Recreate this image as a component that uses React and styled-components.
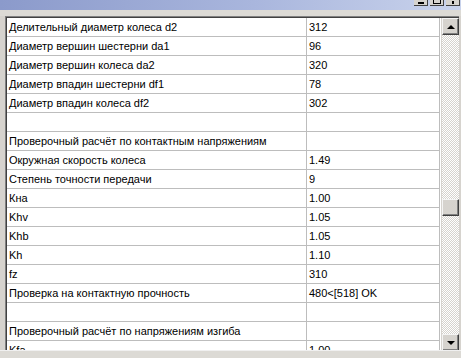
import React from 'react';
import styled, { createGlobalStyle } from 'styled-components';

const GlobalStyle = createGlobalStyle`
  html, body {
    margin: 0;
    padding: 0;
    background: #d6d3ce;
    overflow: hidden;
  }
  body {
    font-family: "Liberation Sans", Arial, sans-serif;
  }
`;

const Window = styled.div`
  width: 461px;
  height: 358px;
  display: flex;
  flex-direction: column;
  background: #d6d3ce;
`;

const TitleBar = styled.div`
  height: 10px;
  flex: none;
  display: flex;
  justify-content: flex-end;
  align-items: flex-start;
  padding-right: 1px;
  gap: 2px;
  background: linear-gradient(to right, #8b9acb 0%, #a9b6dd 55%, #c9d3ec 100%);
`;

const CaptionButton = styled.div`
  width: 14px;
  height: 6px;
  background: #d6d3ce;
  border-right: 1px solid #404040;
  border-bottom: 1px solid #404040;
  display: flex;
  justify-content: center;
  align-items: flex-end;
  padding-bottom: 1px;
  box-sizing: border-box;
`;

const Glyph = styled.div`
  width: ${p => p.w}px;
  height: ${p => p.h}px;
  background: ${p => (p.hollow ? 'transparent' : '#000')};
  border: ${p => (p.hollow ? '1px solid #000' : 'none')};
  border-top: none;
  box-sizing: border-box;
`;

const Strip = styled.div`
  height: 6px;
  flex: none;
  background: #dcdad5;
`;

const Frame = styled.div`
  margin-left: 5px;
  margin-right: 2px;
  height: 334px;
  flex: none;
  display: flex;
  border-top: 1px solid #808080;
  border-left: 1px solid #808080;
  box-shadow: inset 1px 1px 0 #404040;
  padding: 1px 0 0 1px;
  box-sizing: border-box;
  overflow: hidden;
`;

const Grid = styled.div`
  flex: 1;
  background: #fff;
  display: flex;
  flex-direction: column;
  overflow: hidden;
`;

const Row = styled.div`
  display: grid;
  grid-template-columns: 300px 133px;
  height: 19px;
  flex: none;
`;

const Cell = styled.div`
  height: 18px;
  border-bottom: 1px solid #bdbdbd;
  border-right: 1px solid #bdbdbd;
  padding-left: 2px;
  font-size: 11px;
  line-height: 19px;
  color: #000;
  white-space: nowrap;
  overflow: hidden;
`;

const ScrollBar = styled.div`
  width: 17px;
  flex: none;
  margin-left: 1px;
  display: flex;
  flex-direction: column;
  background-color: #ffffff;
  background-image: conic-gradient(#d6d3ce 25%, #ffffff 0 50%, #d6d3ce 0 75%, #ffffff 0);
  background-size: 2px 2px;
`;

const ScrollButton = styled.div`
  width: 17px;
  height: 17px;
  flex: none;
  box-sizing: border-box;
  background: #d6d3ce;
  border-top: 1px solid #f4f4f4;
  border-left: 1px solid #f4f4f4;
  border-right: 1px solid #404040;
  border-bottom: 1px solid #404040;
  box-shadow: inset -1px -1px 0 #808080;
  display: flex;
  align-items: center;
  justify-content: center;
  margin-top: ${p => p.offset || 0}px;
`;

const Arrow = styled.div`
  width: 0;
  height: 0;
  border-left: 4px solid transparent;
  border-right: 4px solid transparent;
  ${p => (p.down ? 'border-top: 4px solid #000;' : 'border-bottom: 4px solid #000;')}
`;

const Bottom = styled.div`
  flex: 1;
  background: #dcdad5;
  border-top: 1px solid #f0f0f0;
`;

const rows = [
  ['Делительный диаметр колеса d2', '312'],
  ['Диаметр вершин шестерни da1', '96'],
  ['Диаметр вершин колеса da2', '320'],
  ['Диаметр впадин шестерни df1', '78'],
  ['Диаметр впадин колеса df2', '302'],
  ['', ''],
  ['Проверочный расчёт по контактным напряжениям', ''],
  ['Окружная скорость колеса', '1.49'],
  ['Степень точности передачи', '9'],
  ['Кна', '1.00'],
  ['Khv', '1.05'],
  ['Khb', '1.05'],
  ['Kh', '1.10'],
  ['fz', '310'],
  ['Проверка на контактную прочность', '480<[518] OK'],
  ['', ''],
  ['Проверочный расчёт по напряжениям изгиба', ''],
  ['Kfa', '1.00'],
];

export default function App() {
  return (
    <Window>
      <GlobalStyle />
      <TitleBar>
        <CaptionButton><Glyph w={6} h={2} /></CaptionButton>
        <CaptionButton><Glyph w={8} h={4} hollow /></CaptionButton>
        <CaptionButton><Glyph w={2} h={3} /></CaptionButton>
      </TitleBar>
      <Strip />
      <Frame>
        <Grid>
          {rows.map(([name, value], i) => (
            <Row key={i}>
              <Cell>{name}</Cell>
              <Cell>{value}</Cell>
            </Row>
          ))}
        </Grid>
        <ScrollBar>
          <ScrollButton><Arrow /></ScrollButton>
          <ScrollButton offset={164} />
          <ScrollButton offset={118}><Arrow down /></ScrollButton>
        </ScrollBar>
      </Frame>
      <Bottom />
    </Window>
  );
}
